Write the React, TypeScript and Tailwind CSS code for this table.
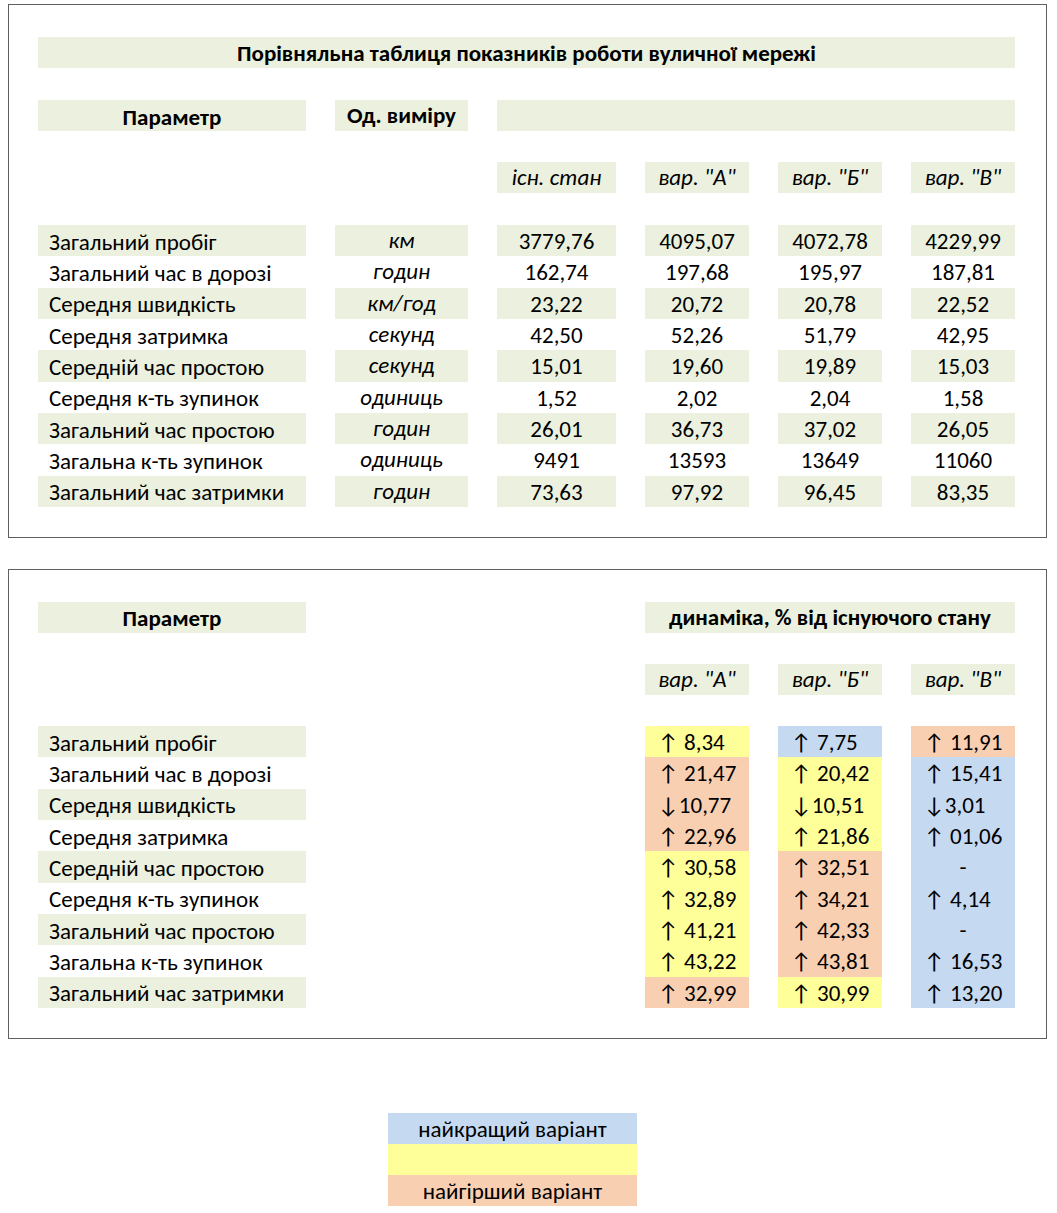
import React from "react";

const GREEN = "bg-[#ebf1de]";
const font = { fontFamily: "Carlito, Lato, 'Noto Sans', sans-serif" };

const params = [
  "Загальний пробіг",
  "Загальний час в дорозі",
  "Середня швидкість",
  "Середня затримка",
  "Середній час простою",
  "Середня к-ть зупинок",
  "Загальний час простою",
  "Загальна к-ть зупинок",
  "Загальний час затримки",
];
const units = ["км", "годин", "км/год", "секунд", "секунд", "одиниць", "годин", "одиниць", "годин"];
const values = [
  ["3779,76", "4095,07", "4072,78", "4229,99"],
  ["162,74", "197,68", "195,97", "187,81"],
  ["23,22", "20,72", "20,78", "22,52"],
  ["42,50", "52,26", "51,79", "42,95"],
  ["15,01", "19,60", "19,89", "15,03"],
  ["1,52", "2,02", "2,04", "1,58"],
  ["26,01", "36,73", "37,02", "26,05"],
  ["9491", "13593", "13649", "11060"],
  ["73,63", "97,92", "96,45", "83,35"],
];

type C = "y" | "b" | "o";
const colorCls: Record<C, string> = {
  y: "bg-[#ffff99]",
  b: "bg-[#c5d9f1]",
  o: "bg-[#f9cfb2]",
};
const dyn: [string, C][][] = [
  [["↑ 8,34", "y"], ["↑ 7,75", "b"], ["↑ 11,91", "o"]],
  [["↑ 21,47", "o"], ["↑ 20,42", "y"], ["↑ 15,41", "b"]],
  [["↓10,77", "o"], ["↓10,51", "y"], ["↓3,01", "b"]],
  [["↑ 22,96", "o"], ["↑ 21,86", "y"], ["↑ 01,06", "b"]],
  [["↑ 30,58", "y"], ["↑ 32,51", "o"], ["-", "b"]],
  [["↑ 32,89", "y"], ["↑ 34,21", "o"], ["↑ 4,14", "b"]],
  [["↑ 41,21", "y"], ["↑ 42,33", "o"], ["-", "b"]],
  [["↑ 43,22", "y"], ["↑ 43,81", "o"], ["↑ 16,53", "b"]],
  [["↑ 32,99", "o"], ["↑ 30,99", "y"], ["↑ 13,20", "b"]],
];

const grid = "grid grid-cols-[268px_133px_119px_104px_104px_104px] gap-x-[29px]";

export default function App() {
  return (
    <div className="w-[1057px] min-h-[1213px] bg-white text-black text-[23px] leading-none" style={font}>
      <div className="pl-[8px] pt-[4px] w-[1047px]">
        {/* Box 1 */}
        <div className="border border-[#5f5f5f] pl-[29px] pt-[32px] pb-[30px]">
          <div className={`${GREEN} h-[31px] w-[977px] flex items-center justify-center font-bold pt-[1px]`}>
            Порівняльна таблиця показників роботи вуличної мережі
          </div>
          <div className={`${grid} mt-[32px] h-[31px]`}>
            <div className={`${GREEN} flex items-center justify-center font-bold pt-[3px]`}>Параметр</div>
            <div className={`${GREEN} flex items-center justify-center font-bold`}>Од. виміру</div>
            <div className={`${GREEN} col-span-4`}></div>
          </div>
          <div className={`${grid} mt-[31px] h-[31px]`}>
            <div></div>
            <div></div>
            <div className={`${GREEN} flex items-center justify-center italic`}>існ. стан</div>
            <div className={`${GREEN} flex items-center justify-center italic`}>вар. "А"</div>
            <div className={`${GREEN} flex items-center justify-center italic`}>вар. "Б"</div>
            <div className={`${GREEN} flex items-center justify-center italic`}>вар. "В"</div>
          </div>
          <div className="mt-[32px] flex flex-col">
            {params.map((p, i) => {
              const g = i % 2 === 0 ? GREEN : "";
              return (
                <div key={p} className={`${grid} h-[31.33px]`}>
                  <div className={`${g} flex items-center pl-[11px] pt-[3px]`}>{p}</div>
                  <div className={`${g} flex items-center justify-center italic`}>{units[i]}</div>
                  {values[i].map((v, j) => (
                    <div key={j} className={`${g} flex items-center justify-center pt-[2px]`}>
                      {v}
                    </div>
                  ))}
                </div>
              );
            })}
          </div>
        </div>

        {/* Box 2 */}
        <div className="mt-[31px] border border-[#5f5f5f] pl-[29px] pt-[32px] pb-[30px]">
          <div className={`${grid} h-[31px]`}>
            <div className={`${GREEN} flex items-center justify-center font-bold pt-[3px]`}>Параметр</div>
            <div></div>
            <div></div>
            <div className={`${GREEN} col-span-3 flex items-center justify-center font-bold pt-[1px]`}>
              динаміка, % від існуючого стану
            </div>
          </div>
          <div className={`${grid} mt-[31px] h-[31px]`}>
            <div></div>
            <div></div>
            <div></div>
            <div className={`${GREEN} flex items-center justify-center italic`}>вар. "А"</div>
            <div className={`${GREEN} flex items-center justify-center italic`}>вар. "Б"</div>
            <div className={`${GREEN} flex items-center justify-center italic`}>вар. "В"</div>
          </div>
          <div className="mt-[31px] flex flex-col">
            {params.map((p, i) => {
              const g = i % 2 === 0 ? GREEN : "";
              return (
                <div key={p} className={`${grid} h-[31.33px]`}>
                  <div className={`${g} flex items-center pl-[11px] pt-[3px]`}>{p}</div>
                  <div></div>
                  <div></div>
                  {dyn[i].map(([t, c], j) => (
                    <div
                      key={j}
                      className={`${colorCls[c]} flex items-center pt-[2px] ${
                        t === "-" ? "justify-center" : "pl-[13px]"
                      }`}
                    >
                      {t}
                    </div>
                  ))}
                </div>
              );
            })}
          </div>
        </div>
      </div>

      {/* Legend */}
      <div className="mt-[74px] ml-[388px] w-[249px] flex flex-col">
        <div className="bg-[#c5d9f1] h-[31px] flex items-center justify-center pt-[2px]">найкращий варіант</div>
        <div className="bg-[#ffff99] h-[31px]"></div>
        <div className="bg-[#f9cfb2] h-[31px] flex items-center justify-center pt-[2px]">найгірший варіант</div>
      </div>
    </div>
  );
}
